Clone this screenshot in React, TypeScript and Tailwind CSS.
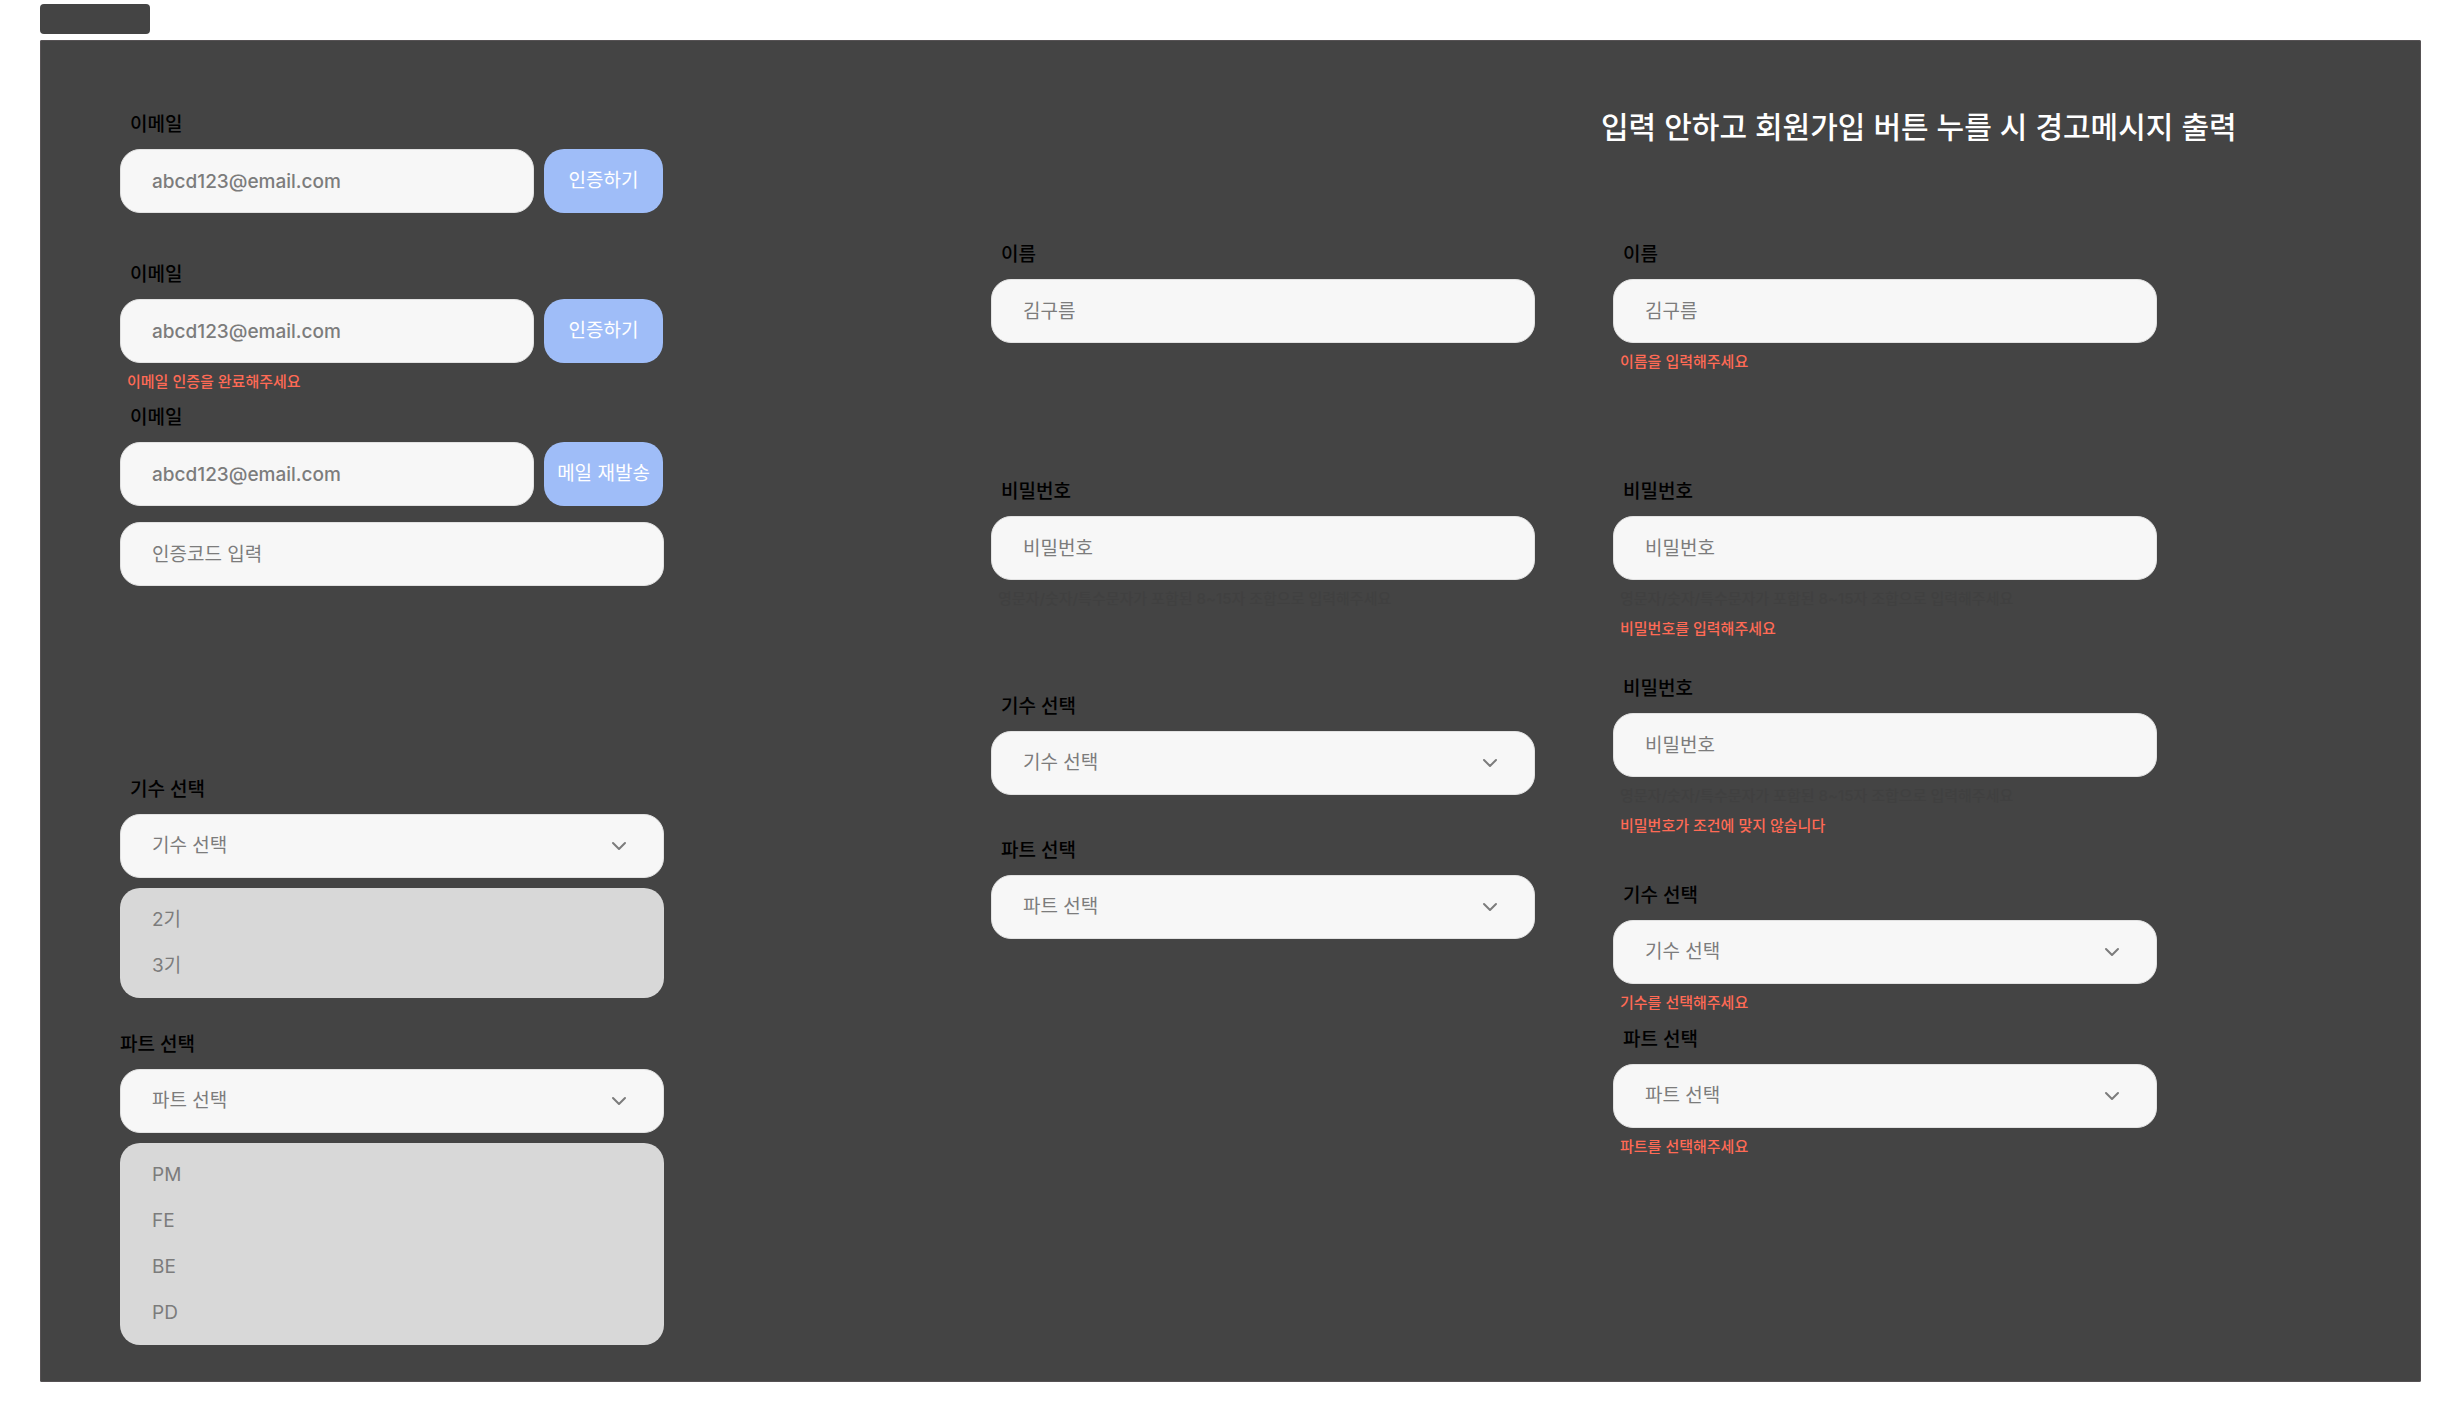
import { useId, type ReactNode } from "react";
import { ChevronDown } from "lucide-react";

const fieldBox =
  "h-16 w-full rounded-[20px] border border-[#e2e2e2] bg-[#f7f7f7] pl-[31px] text-[19px] leading-6 text-[#7c7c7c] outline-none";

function Label({ htmlFor, flush, children }: { htmlFor: string; flush?: boolean; children: ReactNode }) {
  return (
    <label
      htmlFor={htmlFor}
      className={`mb-2.5 block text-[19px] leading-7 font-medium text-black ${flush ? "" : "pl-2.5"}`}
    >
      {children}
    </label>
  );
}

function Notes({ hint, error }: { hint?: string; error?: string }) {
  return (
    <div className="mt-[9px] flex flex-col gap-2.5 pl-[7px] text-[15px] leading-5 font-medium">
      {hint && <p className="text-[#404040]">{hint}</p>}
      {error && <p className="text-[#ff6a55]">{error}</p>}
    </div>
  );
}

interface TextFieldProps {
  label: string;
  placeholder: string;
  type?: string;
  hint?: string;
  error?: string;
}

function TextField({ label, placeholder, type = "text", hint, error }: TextFieldProps) {
  const id = useId();
  return (
    <div>
      <Label htmlFor={id}>{label}</Label>
      <input id={id} type={type} placeholder={placeholder} className={`${fieldBox} block pr-8 placeholder:text-[#7c7c7c]`} />
      {(hint || error) && <Notes hint={hint} error={error} />}
    </div>
  );
}

function EmailField({ action, error, withCode }: { action: string; error?: string; withCode?: boolean }) {
  const id = useId();
  return (
    <div>
      <Label htmlFor={id}>이메일</Label>
      <div className="flex gap-2.5 pr-px">
        <input
          id={id}
          type="email"
          placeholder="abcd123@email.com"
          className={`${fieldBox} min-w-0 flex-1 pr-8 font-medium placeholder:text-[#7c7c7c]`}
        />
        <button type="button" className="h-16 w-[119px] shrink-0 rounded-[20px] bg-[#9fbdf8] text-[19px] leading-6 whitespace-nowrap text-white">
          {action}
        </button>
      </div>
      {withCode && (
        <input
          type="text"
          aria-label="인증코드 입력"
          placeholder="인증코드 입력"
          className={`${fieldBox} mt-4 block pr-8 placeholder:text-[#7c7c7c]`}
        />
      )}
      {error && <Notes error={error} />}
    </div>
  );
}

interface SelectFieldProps {
  label: string;
  options: string[];
  open?: boolean;
  flush?: boolean;
  error?: string;
}

function SelectField({ label, options, open, flush, error }: SelectFieldProps) {
  const id = useId();
  return (
    <div>
      <Label htmlFor={id} flush={flush}>
        {label}
      </Label>
      <div className="relative">
        <select id={id} defaultValue="" className={`${fieldBox} block appearance-none pr-16`}>
          <option value="" disabled>
            {label}
          </option>
          {options.map((option) => (
            <option key={option} value={option}>
              {option}
            </option>
          ))}
        </select>
        <ChevronDown className="pointer-events-none absolute top-5 right-[33px] size-6 text-[#7c7c7c]" strokeWidth={2} />
      </div>
      {open && (
        <ul role="listbox" aria-label={label} className="mt-2.5 rounded-[20px] bg-[#d8d8d8] py-[9px]">
          {options.map((option) => (
            <li key={option} role="option" aria-selected={false} className="flex h-[46px] items-center px-8 text-[19px] leading-6 text-[#7c7c7c]">
              {option}
            </li>
          ))}
        </ul>
      )}
      {error && <Notes error={error} />}
    </div>
  );
}

const cohorts = ["2기", "3기"];
const parts = ["PM", "FE", "BE", "PD"];
const passwordHint = "영문자/숫자/특수문자가 포함된 8~15자 조합으로 입력해주세요";

export default function App() {
  return (
    <div className='min-h-screen bg-white px-10 pt-1 pb-9 font-["Inter","Noto_Sans_CJK_KR",sans-serif]'>
      <div className="h-[30px] w-[110px] rounded-sm bg-[#444444]" />
      <main className="mt-1.5 grid grid-cols-[871fr_610fr_820fr] rounded-xs bg-[#444444] pb-[37px] pl-20 inset-ring inset-ring-[#565254]">
        <form className="w-full max-w-[544px] pt-[71px]">
          <EmailField action="인증하기" />
          <div className="mt-12">
            <EmailField action="인증하기" error="이메일 인증을 완료해주세요" />
          </div>
          <div className="mt-3">
            <EmailField action="메일 재발송" withCode />
          </div>
          <div className="mt-[190px]">
            <SelectField label="기수 선택" options={cohorts} open />
          </div>
          <div className="mt-[33px]">
            <SelectField label="파트 선택" options={parts} open flush />
          </div>
        </form>

        <form className="w-full max-w-[544px] pt-[201px]">
          <TextField label="이름" placeholder="김구름" />
          <div className="mt-[135px]">
            <TextField label="비밀번호" placeholder="비밀번호" type="password" hint={passwordHint} />
          </div>
          <div className="mt-21">
            <SelectField label="기수 선택" options={cohorts} />
          </div>
          <div className="mt-[42px]">
            <SelectField label="파트 선택" options={parts} />
          </div>
        </form>

        <section className="pt-[67px]">
          <h1 className="text-[30px] leading-10 font-medium whitespace-nowrap text-white">
            입력 안하고 회원가입 버튼 누를 시 경고메시지 출력
          </h1>
          <form className="mt-[94px] w-full max-w-[556px] pl-3">
            <TextField label="이름" placeholder="김구름" error="이름을 입력해주세요" />
            <div className="mt-[106px]">
              <TextField label="비밀번호" placeholder="비밀번호" type="password" hint={passwordHint} error="비밀번호를 입력해주세요" />
            </div>
            <div className="mt-9">
              <TextField label="비밀번호" placeholder="비밀번호" type="password" hint={passwordHint} error="비밀번호가 조건에 맞지 않습니다" />
            </div>
            <div className="mt-[46px]">
              <SelectField label="기수 선택" options={cohorts} error="기수를 선택해주세요" />
            </div>
            <div className="mt-[13px]">
              <SelectField label="파트 선택" options={parts} error="파트를 선택해주세요" />
            </div>
          </form>
        </section>
      </main>
    </div>
  );
}
